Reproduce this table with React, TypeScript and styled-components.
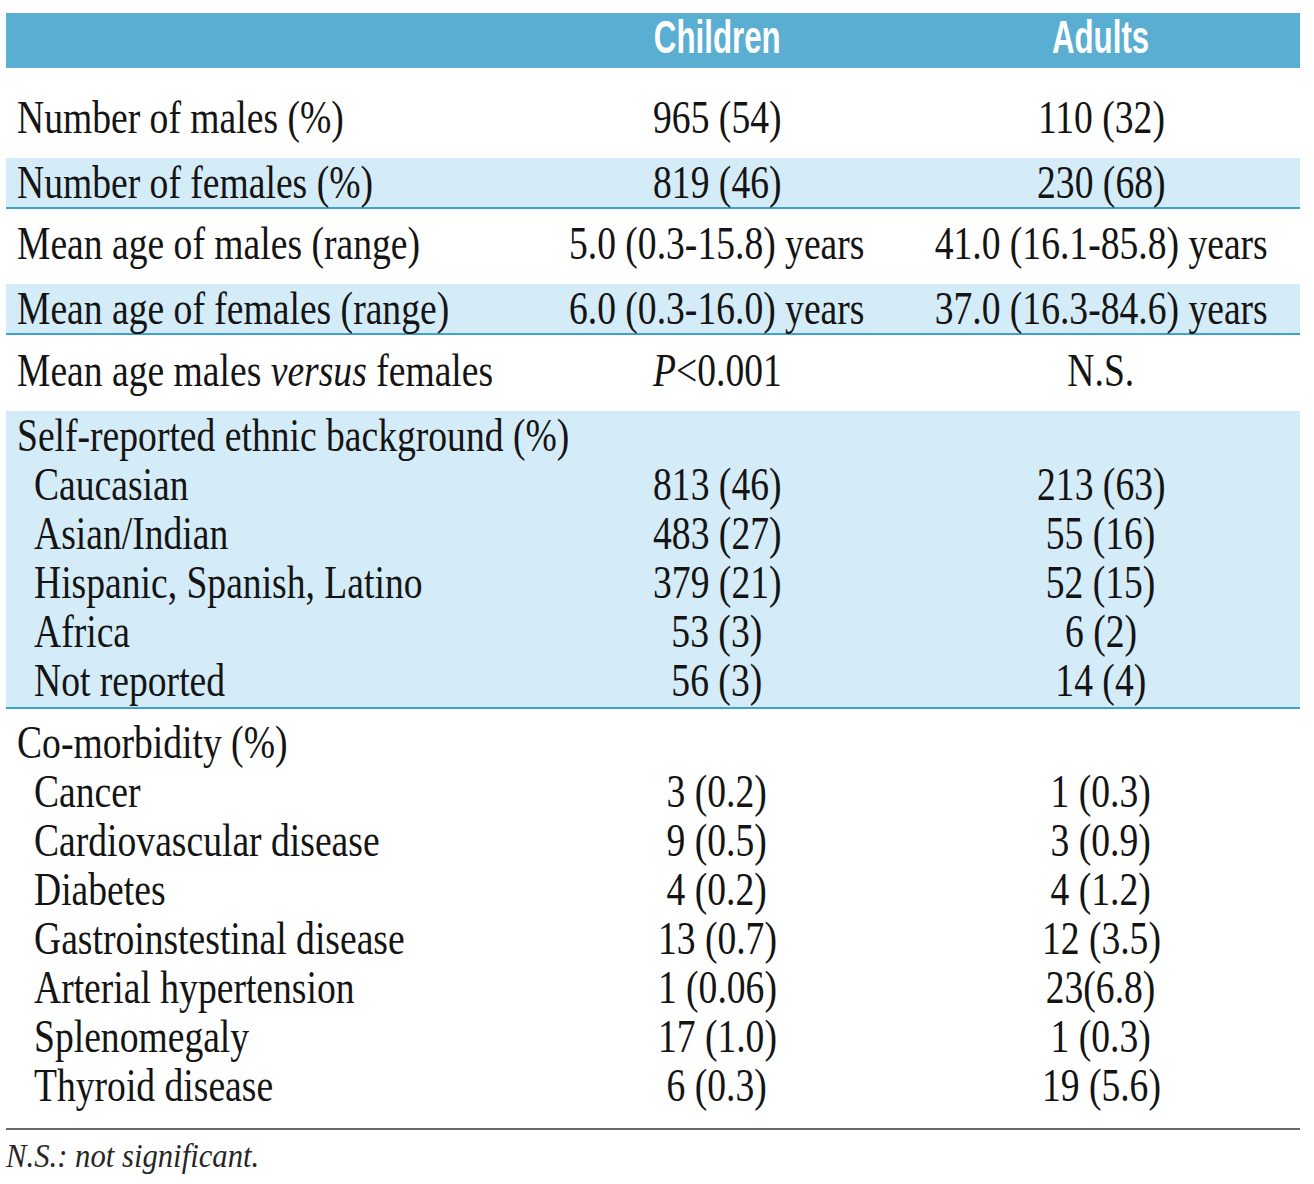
import React from "react";
import styled, { createGlobalStyle } from "styled-components";

const colours = {
  band: "#5aaed2",
  shade: "#d4ebf8",
  rule: "#3ea2cf",
  ink: "#141414",
  grey: "#6a6a6a",
};

const GlobalStyle = createGlobalStyle`
  html, body {
    margin: 0;
    padding: 0;
    background: #ffffff;
  }
`;

const Page = styled("div")`
  width: 1294px;
  padding: 13px 14px 0 6px;
  font-family: "Liberation Serif", "Times New Roman", serif;
  color: ${colours.ink};
`;

const columns = "520px 382px 386px";

const HeaderRow = styled("div")`
  display: grid;
  grid-template-columns: ${columns};
  height: 55px;
  background-color: ${colours.band};
`;

const HeaderCell = styled("div")`
  padding-bottom: 6px;
  font-family: "Liberation Sans", Arial, sans-serif;
  font-weight: 700;
  font-size: 46px;
  line-height: 49px;
  color: #ffffff;
  text-align: center;
`;

const HeaderText = styled("span")`
  display: inline-block;
  white-space: nowrap;
  transform: scaleX(0.68);
  transform-origin: center center;
`;

const Group = styled("div")<{ $shaded?: boolean; $rule?: boolean; $pt: number; $pb: number }>`
  padding-top: ${(p) => p.$pt}px;
  padding-bottom: ${(p) => p.$pb}px;
  background-color: ${(p) => (p.$shaded ? colours.shade : "transparent")};
  border-bottom: ${(p) => (p.$rule ? `2px solid ${colours.rule}` : "none")};
`;

const Line = styled("div")`
  display: grid;
  grid-template-columns: ${columns};
  font-size: 47px;
  line-height: 49px;
  height: 49px;
`;

const Label = styled("div")<{ $indent?: boolean }>`
  padding-left: ${(p) => (p.$indent ? 28 : 11)}px;
  white-space: nowrap;
`;

const Value = styled("div")`
  display: flex;
  justify-content: center;
  min-width: 0;
  white-space: nowrap;
`;

const Cond = styled("span")<{ $origin?: string }>`
  display: inline-block;
  flex: none;
  white-space: nowrap;
  transform: scaleX(0.8);
  transform-origin: ${(p) => p.$origin ?? "left"} center;
`;

const BottomRule = styled("div")`
  height: 2px;
  background-color: ${colours.grey};
`;

const Footnote = styled("p")`
  margin: 0;
  padding-top: 6px;
  font-style: italic;
  font-size: 33px;
  line-height: 40px;
  color: #262626;
`;

const FootText = styled("span")`
  display: inline-block;
  transform: scaleX(0.93);
  transform-origin: left center;
`;

type Row = {
  label: React.ReactNode;
  children?: React.ReactNode;
  adults?: React.ReactNode;
  indent?: boolean;
};

type Block = {
  rows: Row[];
  shaded?: boolean;
  rule?: boolean;
  pt: number;
  pb: number;
};

const blocks: Block[] = [
  { pt: 25, pb: 16, rows: [{ label: "Number of males (%)", children: "965 (54)", adults: "110 (32)" }] },
  {
    pt: 0,
    pb: 0,
    shaded: true,
    rule: true,
    rows: [{ label: "Number of females (%)", children: "819 (46)", adults: "230 (68)" }],
  },
  {
    pt: 10,
    pb: 16,
    rows: [
      {
        label: "Mean age of males (range)",
        children: "5.0 (0.3-15.8) years",
        adults: "41.0 (16.1-85.8) years",
      },
    ],
  },
  {
    pt: 0,
    pb: 0,
    shaded: true,
    rule: true,
    rows: [
      {
        label: "Mean age of females (range)",
        children: "6.0 (0.3-16.0) years",
        adults: "37.0 (16.3-84.6) years",
      },
    ],
  },
  {
    pt: 11,
    pb: 16,
    rows: [
      {
        label: (
          <>
            Mean age males <i>versus</i> females
          </>
        ),
        children: (
          <>
            <i>P</i>&lt;0.001
          </>
        ),
        adults: "N.S.",
      },
    ],
  },
  {
    pt: 0,
    pb: 2,
    shaded: true,
    rule: true,
    rows: [
      { label: "Self-reported ethnic background (%)" },
      { label: "Caucasian", indent: true, children: "813 (46)", adults: "213 (63)" },
      { label: "Asian/Indian", indent: true, children: "483 (27)", adults: "55 (16)" },
      { label: "Hispanic, Spanish, Latino", indent: true, children: "379 (21)", adults: "52 (15)" },
      { label: "Africa", indent: true, children: "53 (3)", adults: "6 (2)" },
      { label: "Not reported", indent: true, children: "56 (3)", adults: "14 (4)" },
    ],
  },
  {
    pt: 9,
    pb: 18,
    rows: [
      { label: "Co-morbidity (%)" },
      { label: "Cancer", indent: true, children: "3 (0.2)", adults: "1 (0.3)" },
      { label: "Cardiovascular disease", indent: true, children: "9 (0.5)", adults: "3 (0.9)" },
      { label: "Diabetes", indent: true, children: "4 (0.2)", adults: "4 (1.2)" },
      { label: "Gastroinstestinal disease", indent: true, children: "13 (0.7)", adults: "12 (3.5)" },
      { label: "Arterial hypertension", indent: true, children: "1 (0.06)", adults: "23(6.8)" },
      { label: "Splenomegaly", indent: true, children: "17 (1.0)", adults: "1 (0.3)" },
      { label: "Thyroid disease", indent: true, children: "6 (0.3)", adults: "19 (5.6)" },
    ],
  },
];

export const App = () => {
  return (
    <>
      <GlobalStyle />
      <Page>
        <HeaderRow>
          <HeaderCell />
          <HeaderCell>
            <HeaderText>Children</HeaderText>
          </HeaderCell>
          <HeaderCell>
            <HeaderText>Adults</HeaderText>
          </HeaderCell>
        </HeaderRow>
        {blocks.map((block, index) => (
          <Group key={index} $shaded={block.shaded} $rule={block.rule} $pt={block.pt} $pb={block.pb}>
            {block.rows.map((row, i) => (
              <Line key={i}>
                <Label $indent={row.indent}>
                  <Cond>{row.label}</Cond>
                </Label>
                <Value>{row.children && <Cond $origin="center">{row.children}</Cond>}</Value>
                <Value>{row.adults && <Cond $origin="center">{row.adults}</Cond>}</Value>
              </Line>
            ))}
          </Group>
        ))}
        <BottomRule />
        <Footnote>
          <FootText>N.S.: not significant.</FootText>
        </Footnote>
      </Page>
    </>
  );
};

export default App;
